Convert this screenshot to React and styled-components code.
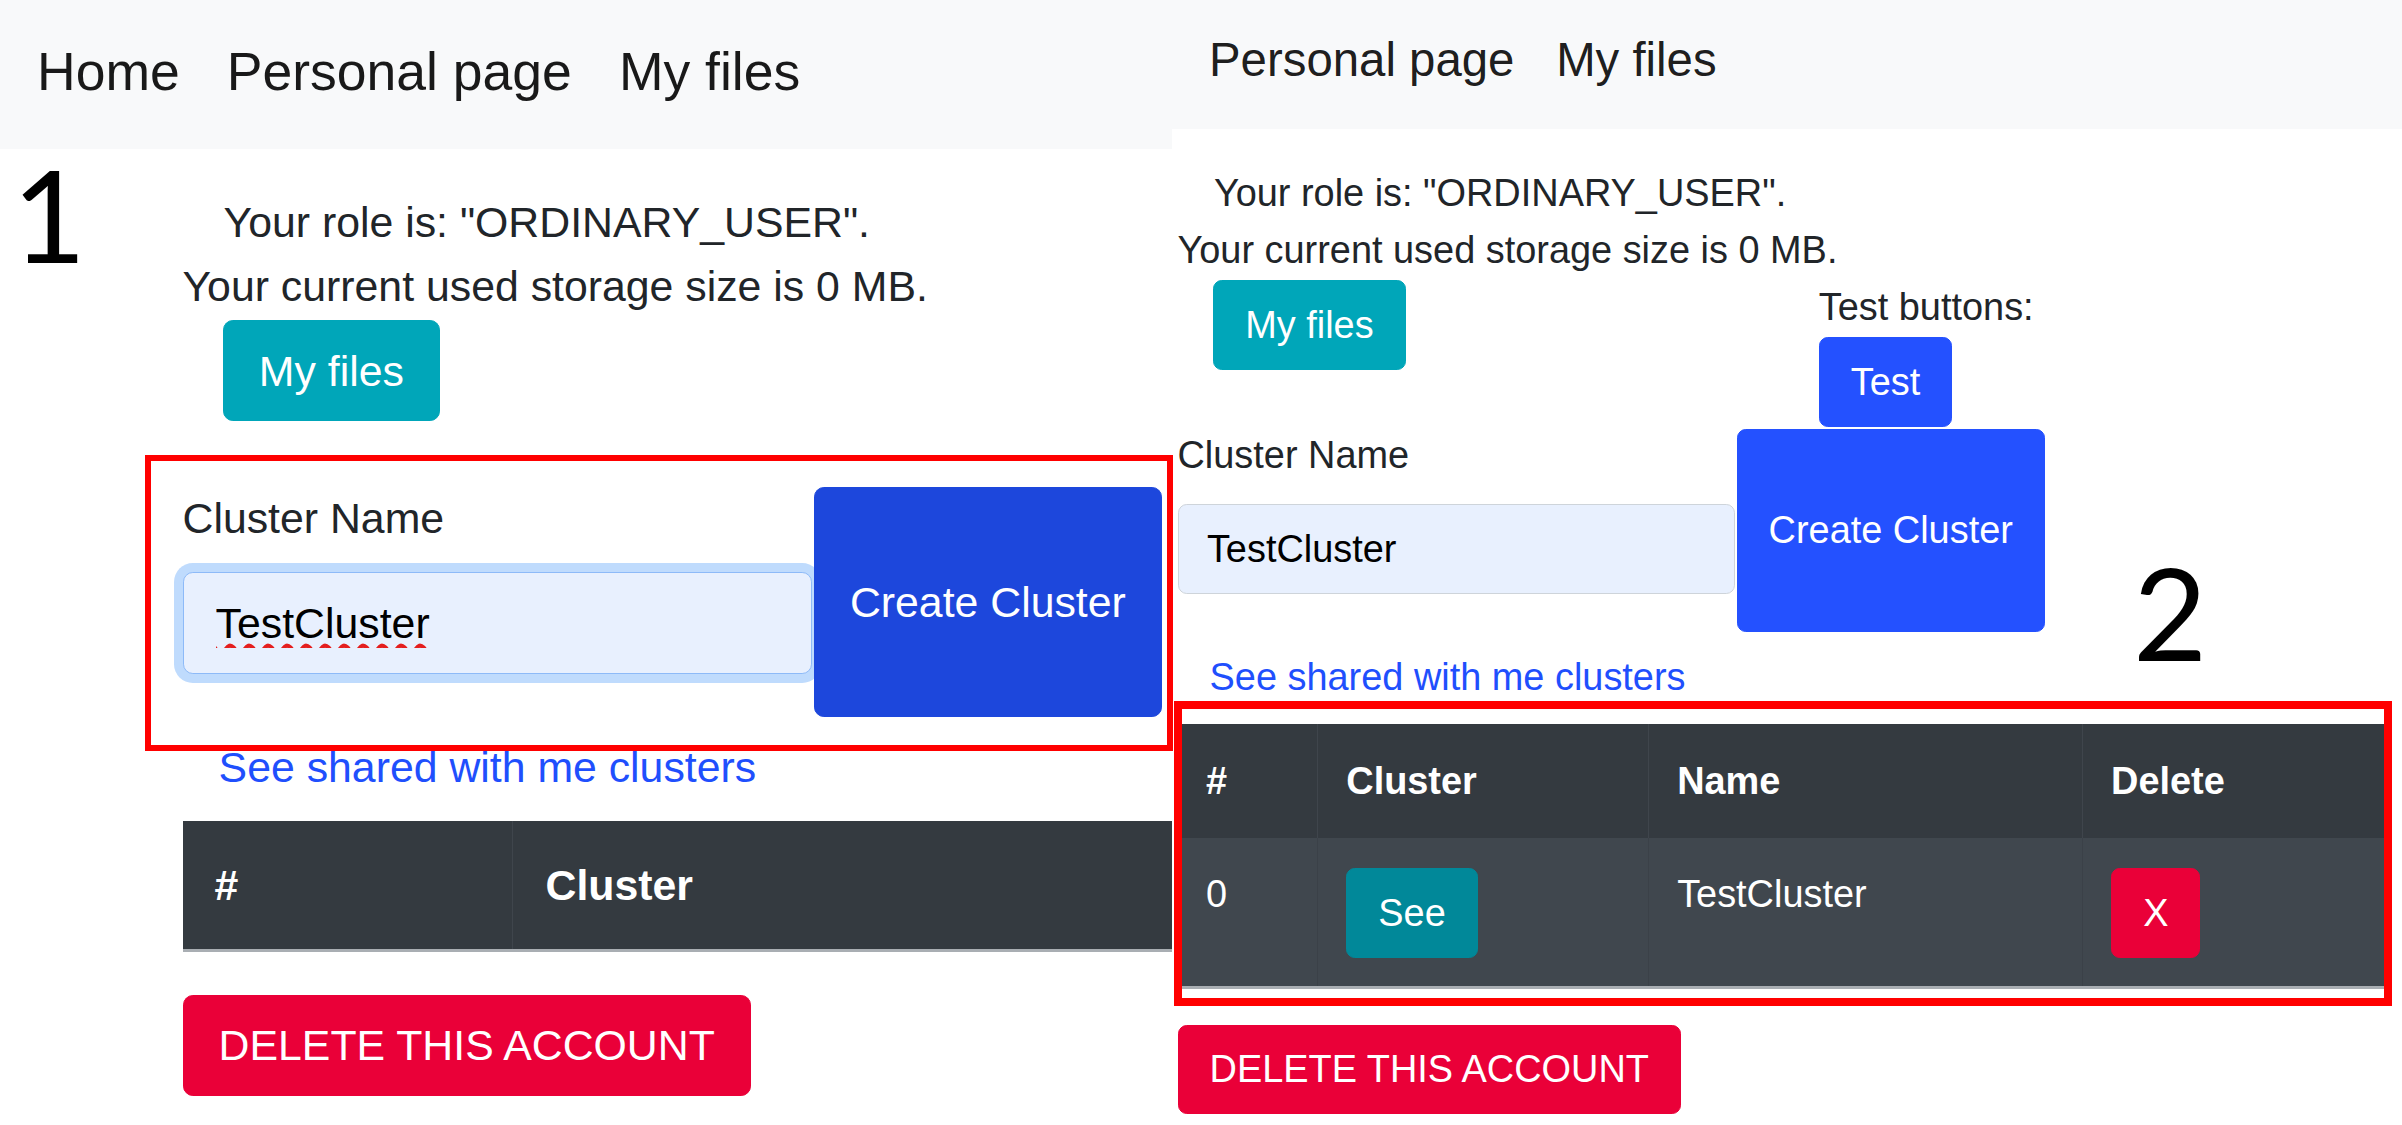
import React from "react";
import styled, { createGlobalStyle } from "styled-components";

const GlobalStyle = createGlobalStyle`
  html, body { margin: 0; padding: 0; background: #fff; }
  body { font-family: "Liberation Sans", Arial, sans-serif; }
`;

const Canvas = styled.div`
  position: relative;
  display: flex;
  width: 2402px;
  height: 1125px;
  overflow: hidden;
  background: #fff;
`;

const Panel = styled.section`
  flex: ${(p) => (p.$width ? `0 0 ${p.$width}px` : "1 1 auto")};
  min-width: 0;
  height: 100%;
  overflow: hidden;
  font-size: ${(p) => p.$rem}px;
  line-height: 1.5;
  color: #212529;
`;

const NavBar = styled.nav`
  display: flex;
  align-items: flex-start;
  gap: 0.88em;
  box-sizing: border-box;
  height: ${(p) => p.$height}px;
  padding: ${(p) => p.$top}px 0 0 37px;
  background: #f8f9fa;
  font-size: 1.25em;
`;

const NavLink = styled.a`
  color: rgba(0, 0, 0, 0.9);
  text-decoration: none;
  white-space: nowrap;
`;

const Body = styled.main`
  padding: ${(p) => p.$top}px ${(p) => p.$right}px 0 ${(p) => p.$left}px;
`;

const Line = styled.div`
  margin-left: ${(p) => (p.$indent ? "0.96em" : "0")};
  white-space: nowrap;
`;

const ActionsRow = styled.div`
  display: flex;
  align-items: flex-start;
`;

const Button = styled.button`
  flex: none;
  box-sizing: border-box;
  margin: 0;
  padding: ${(p) => (p.$tall ? "1.91em" : "0.41em")} 0.82em;
  border: 1px solid ${(p) => p.$bg};
  border-radius: 0.23em;
  background: ${(p) => p.$bg};
  color: #fff;
  font-family: inherit;
  font-size: 1em;
  line-height: 1.5;
  text-transform: ${(p) => (p.$upper ? "uppercase" : "none")};
  white-space: nowrap;
  cursor: pointer;
`;

const MyFilesButton = styled(Button)`
  margin: 0.04em 0 1.5em 0.94em;
`;

const TestGroup = styled.div`
  display: flex;
  flex-direction: column;
  align-items: flex-start;
  margin-left: 10.9em;
`;

const TestLabel = styled.span`
  white-space: nowrap;
`;

const TestButton = styled(Button)`
  margin-top: 0.04em;
`;

const FormRow = styled.form`
  display: flex;
  align-items: flex-start;
  gap: 0.05em;
  margin: 0;
`;

const Field = styled.div`
  display: flex;
  flex-direction: column;
`;

const Label = styled.label`
  margin-bottom: 0.53em;
  white-space: nowrap;
`;

const NameInput = styled.input`
  box-sizing: border-box;
  width: 14.7em;
  height: 2.38em;
  margin: 0;
  padding: 0 0.75em;
  border: 1px solid ${(p) => (p.$focused ? "#8dbaf8" : "#ced4da")};
  border-radius: 0.23em;
  background: #e8f0fe;
  box-shadow: ${(p) => (p.$focused ? "0 0 0 0.21em #bfdbfd" : "none")};
  color: #000;
  font-family: inherit;
  font-size: 1em;
  outline: none;
  text-decoration: ${(p) => (p.$misspelled ? "underline wavy #e41e1e" : "none")};
  text-decoration-skip-ink: none;
  text-underline-offset: 0.14em;
`;

const CreateButton = styled(Button)`
  margin-top: 0.04em;
`;

const SharedLink = styled.a`
  display: inline-block;
  padding: 0.41em 0.82em;
  border: 1px solid transparent;
  color: #1f4ffd;
  text-decoration: none;
  white-space: nowrap;
`;

const Table = styled.table`
  width: 100%;
  table-layout: fixed;
  border-collapse: collapse;
  margin: 0.06em 0 ${(p) => p.$after}em;
  border-bottom: 3px solid #a9aeb3;
  color: #fff;
`;

const Col = styled.col`
  width: ${(p) => (p.$w ? `${p.$w}em` : "auto")};
`;

const Th = styled.th`
  padding: 0.75em;
  text-align: left;
  vertical-align: top;
  font-weight: 700;
  background: #343a40;
  border-left: 1px solid #3f454c;
  white-space: nowrap;
  &:first-child {
    border-left: none;
  }
`;

const Td = styled.td`
  padding: 0.75em;
  vertical-align: top;
  background: #40474e;
  border-left: 1px solid #3b4148;
  white-space: nowrap;
  &:first-child {
    border-left: none;
  }
`;

const CellButton = styled(Button)`
  margin-top: 0.04em;
`;

const Frame = styled.div`
  position: absolute;
  left: ${(p) => p.$x}px;
  top: ${(p) => p.$y}px;
  width: ${(p) => p.$w}px;
  height: ${(p) => p.$h}px;
  box-sizing: border-box;
  border: ${(p) => p.$stroke}px solid #ff0000;
  pointer-events: none;
`;

const Marker = styled.span`
  position: absolute;
  left: ${(p) => p.$x}px;
  top: ${(p) => p.$y}px;
  font-family: Lato, "DejaVu Sans", sans-serif;
  font-size: 128px;
  line-height: 1;
  color: #000;
`;

const COLORS = {
  info: "#00a6b9",
  infoDark: "#018899",
  blueDeep: "#1d47dc",
  blue: "#2451ff",
  danger: "#ea0038",
};

function LeftScreen() {
  return (
    <Panel $width={1172} $rem={42.8}>
      <NavBar $height={149} $top={32}>
        <NavLink href="#">Home</NavLink>
        <NavLink href="#">Personal page</NavLink>
        <NavLink href="#">My files</NavLink>
      </NavBar>
      <Body $top={41} $left={182.5} $right={0}>
        <Line $indent>Your role is: "ORDINARY_USER".</Line>
        <Line>Your current used storage size is 0 MB.</Line>
        <ActionsRow>
          <MyFilesButton $bg={COLORS.info}>My files</MyFilesButton>
        </ActionsRow>
        <FormRow onSubmit={(e) => e.preventDefault()}>
          <Field>
            <Label>Cluster Name</Label>
            <NameInput defaultValue="TestCluster" $focused $misspelled />
          </Field>
          <CreateButton $tall $bg={COLORS.blueDeep}>Create Cluster</CreateButton>
        </FormRow>
        <SharedLink href="#">See shared with me clusters</SharedLink>
        <Table $after={1}>
          <colgroup>
            <Col $w={7.72} />
            <Col />
          </colgroup>
          <thead>
            <tr>
              <Th>#</Th>
              <Th>Cluster</Th>
            </tr>
          </thead>
        </Table>
        <Button $bg={COLORS.danger} $upper>Delete this account</Button>
      </Body>
    </Panel>
  );
}

function RightScreen() {
  return (
    <Panel $rem={37.9}>
      <NavBar $height={129} $top={24}>
        <NavLink href="#">Personal page</NavLink>
        <NavLink href="#">My files</NavLink>
      </NavBar>
      <Body $top={36} $left={5.5} $right={12}>
        <Line $indent>Your role is: "ORDINARY_USER".</Line>
        <Line>Your current used storage size is 0 MB.</Line>
        <ActionsRow>
          <MyFilesButton $bg={COLORS.info}>My files</MyFilesButton>
          <TestGroup>
            <TestLabel>Test buttons:</TestLabel>
            <TestButton $bg={COLORS.blue}>Test</TestButton>
          </TestGroup>
        </ActionsRow>
        <FormRow onSubmit={(e) => e.preventDefault()}>
          <Field>
            <Label>Cluster Name</Label>
            <NameInput defaultValue="TestCluster" spellCheck={false} />
          </Field>
          <CreateButton $tall $bg={COLORS.blue}>Create Cluster</CreateButton>
        </FormRow>
        <SharedLink href="#">See shared with me clusters</SharedLink>
        <Table $after={0.93}>
          <colgroup>
            <Col $w={3.69} />
            <Col $w={8.73} />
            <Col $w={11.45} />
            <Col />
          </colgroup>
          <thead>
            <tr>
              <Th>#</Th>
              <Th>Cluster</Th>
              <Th>Name</Th>
              <Th>Delete</Th>
            </tr>
          </thead>
          <tbody>
            <tr>
              <Td>0</Td>
              <Td>
                <CellButton $bg={COLORS.infoDark}>See</CellButton>
              </Td>
              <Td>TestCluster</Td>
              <Td>
                <CellButton $bg={COLORS.danger}>X</CellButton>
              </Td>
            </tr>
          </tbody>
        </Table>
        <Button $bg={COLORS.danger} $upper>Delete this account</Button>
      </Body>
    </Panel>
  );
}

export default function App() {
  return (
    <>
      <GlobalStyle />
      <Canvas>
        <LeftScreen />
        <RightScreen />
        <Frame $x={145} $y={455} $w={1028} $h={296} $stroke={6} />
        <Frame $x={1174} $y={701} $w={1218} $h={305} $stroke={8} />
        <Marker $x={12} $y={150}>1</Marker>
        <Marker $x={2133} $y={548}>2</Marker>
      </Canvas>
    </>
  );
}
